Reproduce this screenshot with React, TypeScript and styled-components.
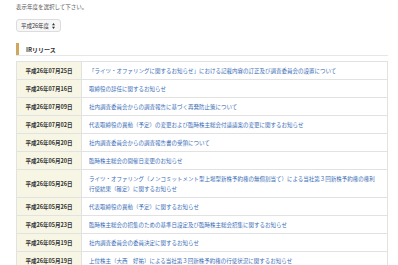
import React from "react";
import styled, { createGlobalStyle } from "styled-components";

const Global = createGlobalStyle`
  html, body { margin: 0; padding: 0; background: #ffffff; }
  body {
    font-family: "Noto Sans CJK JP", "Noto Sans", sans-serif;
    -webkit-text-size-adjust: none;
  }
`;

const Page = styled.div`
  padding: 2px 10px 0 16px;
`;

const Intro = styled.p`
  margin: 0;
  font-size: 5.5px;
  line-height: 10px;
  color: #555555;
`;

const YearSelect = styled.div`
  margin-top: 7px;
  width: 45px;
  height: 13px;
  box-sizing: border-box;
  border: 1px solid #dcdcdc;
  border-radius: 3px;
  background: #f7f7f7;
  display: flex;
  align-items: center;
  justify-content: space-between;
  padding: 0 5px 0 4px;
  font-size: 5.5px;
  color: #333333;
`;

const Arrows = styled.svg`
  width: 3px;
  height: 6px;
`;

const Heading = styled.h2`
  margin: 11px 0 0;
  height: 12px;
  display: flex;
  align-items: center;
  font-size: 6px;
  font-weight: 700;
  color: #333333;
  border-bottom: 1px solid #e6e6e6;
  &::before {
    content: "";
    width: 3px;
    height: 12px;
    background: #cfa85e;
    margin-right: 7px;
  }
`;

const Table = styled.table`
  margin-top: 5px;
  width: 100%;
  border-collapse: collapse;
  border: 1px solid #e2e2e2;
  font-size: 5.5px;
  line-height: 10px;
`;

const DateCell = styled.th`
  width: 65px;
  box-sizing: border-box;
  background: #f7f5e4;
  color: #333333;
  font-weight: 700;
  text-align: center;
  padding: 3.5px 0;
  border-top: 1px solid #e2e2e2;
  border-right: 1px solid #e2e2e2;
  white-space: nowrap;
`;

const TitleCell = styled.td`
  padding: 3.5px 9px 3.5px 7px;
  border-top: 1px solid #e2e2e2;
  text-align: left;
`;

const Link = styled.a`
  color: #3a6db5;
  text-decoration: none;
`;

const rows: [string, string][] = [
  ["平成26年07月25日", "「ライツ・オファリングに関するお知らせ」における記載内容の訂正及び調査委員会の設置について"],
  ["平成26年07月16日", "取締役の辞任に関するお知らせ"],
  ["平成26年07月09日", "社内調査委員会からの調査報告に基づく再発防止策について"],
  ["平成26年07月02日", "代表取締役の異動（予定）の変更および臨時株主総会付議議案の変更に関するお知らせ"],
  ["平成26年06月20日", "社内調査委員会からの調査報告書の受領について"],
  ["平成26年06月20日", "臨時株主総会の開催日変更のお知らせ"],
  ["平成26年05月26日", "ライツ・オファリング（ノンコミットメント型上場型新株予約権の無償割当て）による当社第３回新株予約権の権利行使結果（確定）に関するお知らせ"],
  ["平成26年05月26日", "代表取締役の異動（予定）に関するお知らせ"],
  ["平成26年05月23日", "臨時株主総会の招集のための基準日設定及び臨時株主総会招集に関するお知らせ"],
  ["平成26年05月19日", "社内調査委員会の委員決定に関するお知らせ"],
  ["平成26年05月19日", "上位株主（大西　好祐）による当社第３回新株予約権の行使状況に関するお知らせ"],
];

export default function App() {
  return (
    <Page>
      <Global />
      <Intro>表示年度を選択して下さい。</Intro>
      <YearSelect>
        <span>平成26年度</span>
        <Arrows viewBox="0 0 3 6">
          <path d="M1.5 0 L3 2.3 L0 2.3 Z M1.5 6 L3 3.7 L0 3.7 Z" fill="#333" />
        </Arrows>
      </YearSelect>
      <Heading>IRリリース</Heading>
      <Table>
        <tbody>
          {rows.map(([d, t], i) => (
            <tr key={i}>
              <DateCell>{d}</DateCell>
              <TitleCell>
                <Link href="#">{t}</Link>
              </TitleCell>
            </tr>
          ))}
        </tbody>
      </Table>
    </Page>
  );
}
